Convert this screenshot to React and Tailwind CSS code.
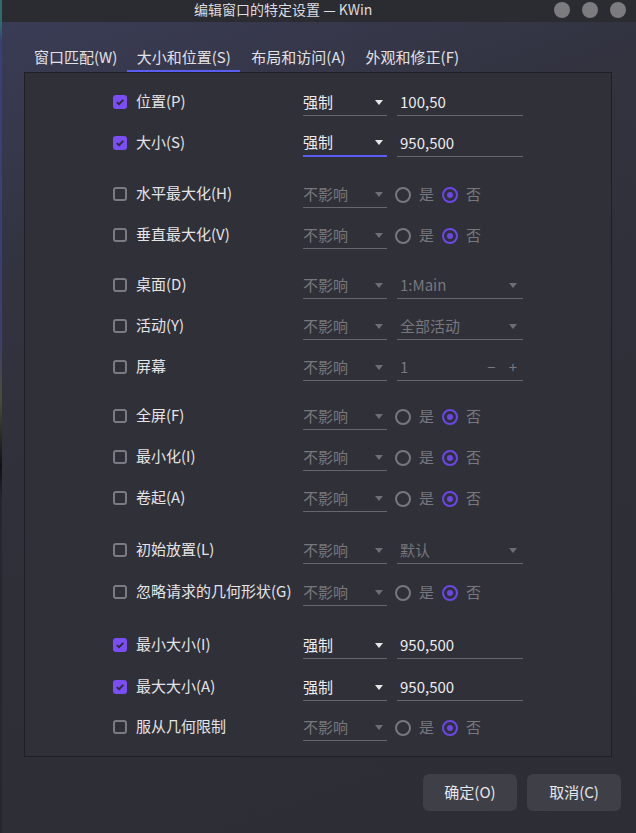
import React from "react";

const font = { fontFamily: '"Noto Sans CJK SC", "Noto Sans", sans-serif' };

const Check = ({ on }) =>
  on ? (
    <span className="flex h-[14px] w-[14px] items-center justify-center rounded-[3px] bg-[#7b4ef5]">
      <svg width="10" height="10" viewBox="0 0 10 10">
        <path d="M1.8 5.2 L4 7.2 L8.3 2.8" fill="none" stroke="#2c2c35" strokeWidth="1.8" />
      </svg>
    </span>
  ) : (
    <span className="h-[14px] w-[14px] rounded-[3px] border-2 border-[#7a7a80]" />
  );

const Arrow = ({ dim }) => (
  <svg width="8" height="5" viewBox="0 0 8 5">
    <path d="M0 0 L8 0 L4 5 Z" fill={dim ? "#6e6e75" : "#e8e8ea"} />
  </svg>
);

const Combo = ({ value, dim, focus }) => (
  <div
    className={`flex h-[27px] w-[84px] items-center justify-between pr-[4px] ${
      focus ? "border-b-2 border-[#5a5df2]" : "border-b border-[#66666d]"
    } ${dim ? "text-[#77777d]" : "text-[#ececee]"}`}
  >
    <span>{value}</span>
    <Arrow dim={dim} />
  </div>
);

const Field = ({ children, dim }) => (
  <div
    className={`flex h-[27px] w-[126px] items-center justify-between border-b border-[#66666d] pl-[3px] pr-[6px] ${
      dim ? "text-[#77777d]" : "text-[#ececee]"
    }`}
  >
    {children}
  </div>
);

const Radios = () => (
  <div className="flex items-center text-[#77777d]">
    <span className="ml-[-2px] h-[16px] w-[16px] rounded-full border-2 border-[#77777d]" />
    <span className="ml-[8px]">是</span>
    <span className="ml-[8px] flex h-[16px] w-[16px] items-center justify-center rounded-full border-2 border-[#6c47e6]">
      <span className="h-[6px] w-[6px] rounded-full bg-[#6c47e6]" />
    </span>
    <span className="ml-[8px]">否</span>
  </div>
);

const Row = ({ on, label, children, mt }) => (
  <div className={`flex h-[41px] items-center ${mt || ""}`}>
    <div className="flex w-[190px] items-center">
      <Check on={on} />
      <span className="ml-[9px] whitespace-nowrap text-[#e4e4e7]">{label}</span>
    </div>
    <div className="flex items-center gap-[10px] pt-[2px]">{children}</div>
  </div>
);

export default function App() {
  return (
    <div
      className="relative flex h-[833px] w-[636px] flex-col overflow-hidden bg-[#2d2e36] text-[15px]"
      style={font}
    >
      <div className="absolute left-0 top-0 h-full w-[2px] bg-[linear-gradient(#2f6a6e_0%,#2f6a6e_3%,#3a3f7a_5%,#3b3f70_40%,#4a4a3a_48%,#101014_56%,#26262e_60%,#26262e_100%)]" />
      <div className="relative ml-[2px] flex h-[22px] items-center bg-[#2b2b32] text-[14px] text-[#dcdcdf]">
        <span className="ml-[192px] mt-[-4px] whitespace-nowrap">编辑窗口的特定设置 — KWin</span>
        <div className="absolute right-[10px] top-[2px] flex gap-[12px]">
          <span className="h-[16px] w-[16px] rounded-full bg-[#7b7b80]" />
          <span className="h-[16px] w-[16px] rounded-full bg-[#7b7b80]" />
          <span className="h-[16px] w-[16px] rounded-full bg-[#7b7b80]" />
        </div>
      </div>
      <div className="ml-[2px] flex flex-1 flex-col bg-[linear-gradient(160deg,#3a3c56_0%,#32333f_25%,#2e2f37_55%,#2d2e35_100%)]">
        <div className="mt-[23px] flex h-[27px] pl-[32px] pt-[1px] text-[#e2e2e5]">
          <div>窗口匹配(W)</div>
          <div className="ml-[10px] flex h-[26px] w-[113px] justify-center border-b-2 border-[#5a5df2]">大小和位置(S)</div>
          <div className="ml-[11px]">布局和访问(A)</div>
          <div className="ml-[20px]">外观和修正(F)</div>
        </div>
        <div className="ml-[22px] h-[685px] w-[588px] border border-[#1f1f25] bg-[#303039] pl-[88px] pt-[8px]">
          <Row on label="位置(P)">
            <Combo value="强制" />
            <Field>100,50</Field>
          </Row>
          <Row on label="大小(S)">
            <Combo value="强制" focus />
            <Field>950,500</Field>
          </Row>
          <Row label="水平最大化(H)" mt="mt-[10px]">
            <Combo value="不影响" dim />
            <Radios />
          </Row>
          <Row label="垂直最大化(V)">
            <Combo value="不影响" dim />
            <Radios />
          </Row>
          <Row label="桌面(D)" mt="mt-[9px]">
            <Combo value="不影响" dim />
            <Field dim>
              <span>1:Main</span>
              <Arrow dim />
            </Field>
          </Row>
          <Row label="活动(Y)">
            <Combo value="不影响" dim />
            <Field dim>
              <span>全部活动</span>
              <Arrow dim />
            </Field>
          </Row>
          <Row label="屏幕">
            <Combo value="不影响" dim />
            <Field dim>
              <span>1</span>
              <span className="flex gap-[13px] text-[#77777d]">
                <span>−</span>
                <span>+</span>
              </span>
            </Field>
          </Row>
          <Row label="全屏(F)" mt="mt-[8px]">
            <Combo value="不影响" dim />
            <Radios />
          </Row>
          <Row label="最小化(I)">
            <Combo value="不影响" dim />
            <Radios />
          </Row>
          <Row label="卷起(A)">
            <Combo value="不影响" dim />
            <Radios />
          </Row>
          <Row label="初始放置(L)" mt="mt-[11px]">
            <Combo value="不影响" dim />
            <Field dim>
              <span>默认</span>
              <Arrow dim />
            </Field>
          </Row>
          <Row label="忽略请求的几何形状(G)" mt="mt-[1px]">
            <Combo value="不影响" dim />
            <Radios />
          </Row>
          <Row on label="最小大小(I)" mt="mt-[12px]">
            <Combo value="强制" />
            <Field>950,500</Field>
          </Row>
          <Row on label="最大大小(A)" mt="mt-[1px]">
            <Combo value="强制" />
            <Field>950,500</Field>
          </Row>
          <Row label="服从几何限制" mt="mt-[-1px]">
            <Combo value="不影响" dim />
            <Radios />
          </Row>
        </div>
        <div className="mt-[17px] flex justify-end gap-[10px] pr-[15px]">
          <button className="h-[37px] w-[94px] rounded-md bg-[#3e3f47] text-[#e8e8ea]">确定(O)</button>
          <button className="h-[37px] w-[94px] rounded-md bg-[#3e3f47] text-[#e8e8ea]">取消(C)</button>
        </div>
      </div>
    </div>
  );
}
